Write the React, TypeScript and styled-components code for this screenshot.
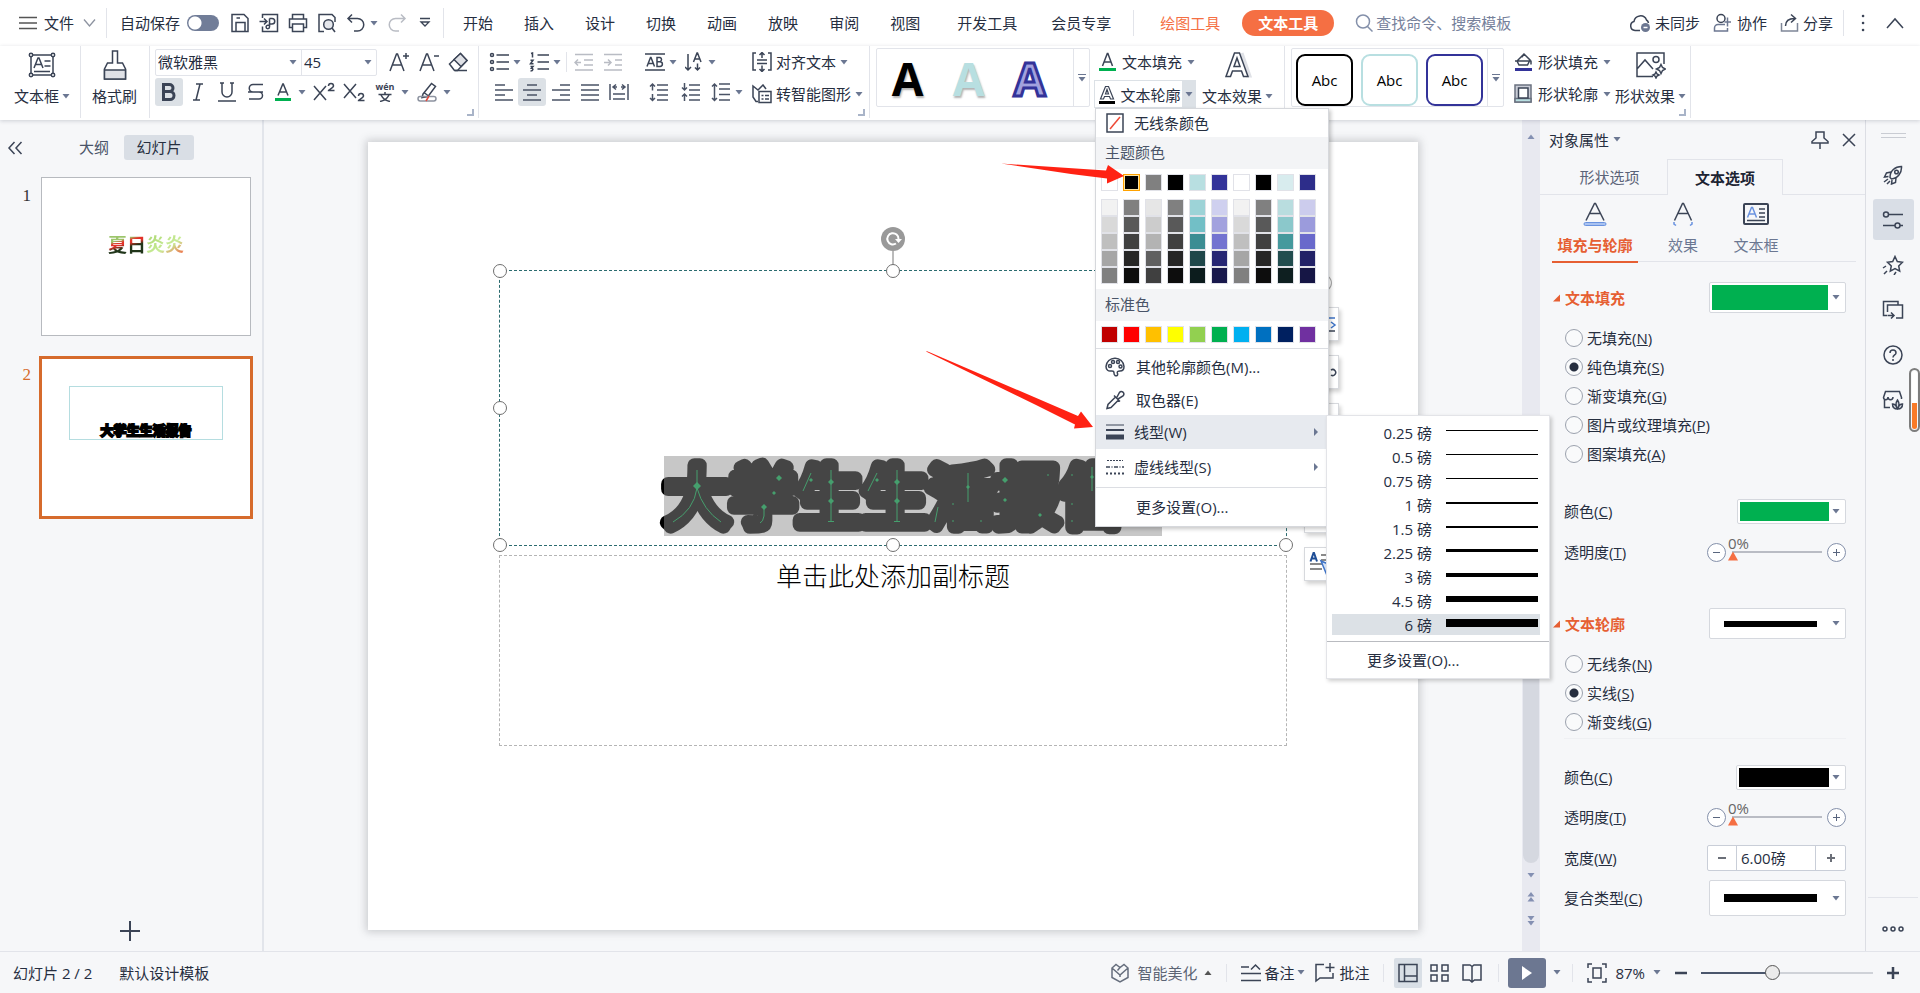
import React from "react";
import styled, { createGlobalStyle, css } from "styled-components";

const ink = "#262e3f";
const slate = "#6b7792";
const line = "#e2e4ea";
const accent = "#e65f33";
const sans = `"Open Sans", "Noto Sans CJK SC", sans-serif`;

const Global = createGlobalStyle`
  * { box-sizing: border-box; }
  body { margin: 0; background: #f6f7f9; color: ${ink}; font: 15px/20px ${sans}; }
  button, input, select { font: inherit; color: inherit; margin: 0; padding: 0; border: 0; background: none; }
  button { display: flex; align-items: center; white-space: nowrap; cursor: pointer; }
  svg { display: block; flex: none; }
`;

/* ---------- primitives ---------- */
type IconProps = { w?: number; h?: number; children: React.ReactNode; stroke?: string; sw?: number };
const Icon = ({ w = 20, h = 20, children, stroke = "#3b4456", sw = 1.5 }: IconProps) => (
  <svg width={w} height={h} viewBox={`0 0 ${w} ${h}`} fill="none" stroke={stroke} strokeWidth={sw} aria-hidden="true">
    {children}
  </svg>
);
const Caret = ({ up, fill = slate }: { up?: boolean; fill?: string }) => (
  <svg width="8" height="5" viewBox="0 0 8 5" aria-hidden="true">
    <path d={up ? "M0.5 5L4 0.5 7.5 5z" : "M0.5 0h7L4 4.5z"} fill={fill} />
  </svg>
);

const Page = styled.div`
  display: grid;
  grid-template-rows: 46px 74px 1fr 41px;
  min-height: 100vh;
`;
const Rule = styled.i<{ $h: number }>`
  flex: none;
  width: 1px;
  height: ${(p) => p.$h}px;
  background: ${line};
`;
const Space = styled.span`
  flex: 1;
`;

/* ---------- menu bar ---------- */
const MenuBar = styled.header`
  display: flex;
  align-items: center;
  background: #fff;
  padding: 0 16px 0 18px;
`;
const Cluster = styled.div<{ $gap: number; $pl?: number; $pr?: number }>`
  display: flex;
  align-items: center;
  gap: ${(p) => p.$gap}px;
  padding-left: ${(p) => p.$pl ?? 0}px;
  padding-right: ${(p) => p.$pr ?? 0}px;
`;
const MenuButton = styled.button<{ $gap?: number; $hot?: boolean }>`
  gap: ${(p) => p.$gap ?? 6}px;
  height: 28px;
  ${(p) => p.$hot && css`color: #f56f43;`}
`;
const Muted = styled.span`
  color: #5c6474;
`;
const Pill = styled.button`
  height: 26px;
  padding: 0 16px;
  border-radius: 13px;
  background: #f56f43;
  color: #fff;
  font-weight: 700;
`;
const AutoSave = styled.label`
  display: flex;
  align-items: center;
  gap: 7px;
`;
const Toggle = styled.input`
  appearance: none;
  width: 32px;
  height: 16px;
  border-radius: 8px;
  background: radial-gradient(circle at 8px 8px, #fff 6px, #717d98 7px);
`;
const Search = styled.label`
  display: flex;
  align-items: center;
  gap: 3px;
`;
const SearchInput = styled.input`
  width: 180px;
  outline: none;
  &::placeholder { color: #76819b; opacity: 1; }
`;

/* ---------- ribbon ---------- */
const Ribbon = styled.div`
  display: flex;
  background: #fff;
  box-shadow: 0 1px 4px rgba(60, 70, 90, 0.22);
  position: relative;
  z-index: 5;
`;
const Group = styled.section<{ $l: number; $r: number; $gap?: number; $plain?: boolean }>`
  position: relative;
  display: flex;
  gap: ${(p) => p.$gap ?? 4}px;
  height: 72px;
  padding: 2px ${(p) => p.$r}px 0 ${(p) => p.$l}px;
  border-right: ${(p) => (p.$plain ? 0 : 1)}px solid ${line};
`;
const Rows = styled.div<{ $gap?: number }>`
  display: grid;
  grid-template-rows: 28px 28px;
  row-gap: ${(p) => p.$gap ?? 2}px;
  align-content: start;
`;
const Row = styled.div<{ $pl?: number }>`
  display: flex;
  align-items: center;
  padding-left: ${(p) => p.$pl ?? 0}px;
`;
const Tool = styled.button<{ $w?: number; $on?: boolean; $gap?: number }>`
  justify-content: center;
  gap: ${(p) => p.$gap ?? 4}px;
  width: ${(p) => (p.$w ? p.$w + "px" : "auto")};
  height: 28px;
  border-radius: 3px;
  background: ${(p) => (p.$on ? "#dce1e6" : "transparent")};
`;
const BigTool = styled.button`
  flex-direction: column;
  gap: 4px;
  height: 60px;
`;
const BigIcon = styled.span`
  display: grid;
  place-items: center;
  height: 34px;
`;
const BigLabel = styled.span`
  display: flex;
  align-items: center;
  gap: 3px;
`;
const Launcher = styled.button`
  position: absolute;
  right: 4px;
  bottom: 2px;
  width: 7px;
  height: 7px;
  border: solid #a9b4c8;
  border-width: 0 2px 2px 0;
`;
const FontFields = styled.div`
  display: grid;
  grid-template-columns: 145px 75px;
  height: 27px;
  border: 1px solid ${line};
  border-radius: 2px;
`;
const SelectWrap = styled.label`
  display: flex;
  align-items: center;
  padding: 0 4px 0 2px;
  & + & { border-left: 1px solid ${line}; }
`;
const BareSelect = styled.select`
  appearance: none;
  flex: 1;
  min-width: 0;
  height: 25px;
  line-height: 25px;
  outline: none;
`;
const Gallery = styled.div`
  display: flex;
  height: 59px;
  border: 1px solid ${line};
  border-radius: 2px;
`;
const GalleryItems = styled.div<{ $gap: number; $pad: string }>`
  display: flex;
  gap: ${(p) => p.$gap}px;
  padding: ${(p) => p.$pad};
`;
const GalleryMore = styled.button`
  flex-direction: column;
  justify-content: center;
  gap: 2px;
  width: 16px;
  border-left: 1px solid ${line};
`;
const MoreBar = styled.i`
  width: 8px;
  height: 1px;
  background: ${slate};
`;
const WordArt = styled.button<{ $c: string; $outline?: string }>`
  justify-content: center;
  width: 61px;
  font: 700 46px/56px "Open Sans", sans-serif;
  color: ${(p) => p.$c};
  text-shadow: 1px 2px 2px rgba(0, 0, 0, 0.3);
  ${(p) => p.$outline && css`-webkit-text-stroke: 3px ${p.$outline}; text-shadow: none;`}
`;
const ShapeStyle = styled.button<{ $c: string }>`
  justify-content: center;
  width: 57px;
  height: 52px;
  border: 2px solid ${(p) => p.$c};
  border-radius: 9px;
  color: #000;
`;
const Split = styled.div`
  position: relative;
  display: flex;
  justify-content: space-between;
  width: 102px;
  height: 28px;
  border: 1px solid #dce1e6;
`;
const SplitArrow = styled.button`
  justify-content: center;
  width: 13px;
  background: #dce1e6;
`;

/* ---------- drop-down menus ---------- */
const Menu = styled.div`
  position: absolute;
  top: 27px;
  left: 0;
  width: 234px;
  background: #fff;
  border: 1px solid #d6d8dc;
  box-shadow: 2px 2px 4px rgba(0, 0, 0, 0.22);
  z-index: 10;
`;
const MenuItem = styled.button<{ $h: number; $on?: boolean; $gap?: number }>`
  width: 100%;
  height: ${(p) => p.$h}px;
  padding: 0 10px 0 9px;
  gap: ${(p) => p.$gap ?? 9}px;
  background: ${(p) => (p.$on ? "#e7eaef" : "transparent")};
`;
const MenuIcon = styled.span`
  display: grid;
  place-items: center;
  width: 20px;
`;
const MenuHead = styled.h3`
  margin: 0;
  padding: 5px 9px 7px;
  background: #f3f4f6;
  color: #4a5468;
  font-size: 15px;
  line-height: 20px;
  font-weight: 400;
`;
const Swatches = styled.div<{ $pad: string }>`
  display: grid;
  grid-template-columns: repeat(10, 17px);
  column-gap: 5px;
  padding: ${(p) => p.$pad};
`;
const Swatch = styled.button<{ $c: string; $on?: boolean }>`
  height: 17px;
  background: ${(p) => p.$c};
  border: 1px solid ${(p) => (p.$on ? "#ffa200" : "#e1e2e8")};
  ${(p) => p.$on && css`box-shadow: inset 0 0 0 1px #ffe5a0;`}
`;
const MenuRule = styled.hr<{ $c?: string; $top?: number }>`
  margin: ${(p) => p.$top ?? 0}px 0 0;
  border: 0;
  height: 1px;
  background: ${(p) => p.$c ?? "#dcdee3"};
`;
const SubAnchor = styled.div`
  position: relative;
`;
const SubMenu = styled.div`
  position: absolute;
  top: 0;
  left: 230px;
  width: 224px;
  padding-top: 6px;
  background: #fff;
  border: 1px solid #e3e4e8;
  box-shadow: 2px 2px 4px rgba(0, 0, 0, 0.2);
`;
const Weight = styled.button<{ $on?: boolean }>`
  width: 208px;
  height: 21px;
  margin: 0 0 3px 5px;
  padding: 0 2px 0 0;
  justify-content: flex-end;
  gap: 14px;
  background: ${(p) => (p.$on ? "#dce1e6" : "transparent")};
`;
const Stroke = styled.span<{ $t: number }>`
  display: flex;
  align-items: center;
  width: 92px;
  height: 10px;
  margin-bottom: 4px;
  &::before { content: ""; width: 100%; height: ${(p) => p.$t}px; background: #000; }
`;

/* ---------- workspace ---------- */
const Body = styled.main`
  display: grid;
  grid-template-columns: 264px minmax(0, 1fr) 18px 326px 54px;
  border-bottom: 1px solid ${line};
`;
const Outline = styled.aside`
  display: flex;
  flex-direction: column;
  border-right: 2px solid #e2e5eb;
  padding: 15px 9px 10px 7px;
`;
const OutlineTabs = styled.div`
  display: flex;
  align-items: center;
  height: 25px;
  margin-bottom: 17px;
`;
const OutlineTab = styled.button<{ $on?: boolean }>`
  justify-content: center;
  height: 25px;
  width: ${(p) => (p.$on ? 70 : 60)}px;
  padding-bottom: 2px;
  border-radius: 3px;
  background: ${(p) => (p.$on ? "#d9dee5" : "transparent")};
  color: ${(p) => (p.$on ? ink : "#4a5468")};
`;
const ThumbRow = styled.div<{ $on?: boolean }>`
  display: grid;
  grid-template-columns: 24px 1fr;
  align-items: start;
  gap: ${(p) => (p.$on ? 8 : 10)}px;
  margin: 0 0 20px;
  padding-right: ${(p) => (p.$on ? 0 : 2)}px;
`;
const ThumbNo = styled.span<{ $on?: boolean }>`
  padding: 9px 0 0;
  text-align: right;
  font: 17px/20px "Liberation Serif", serif;
  color: ${(p) => (p.$on ? "#d66b2c" : "#333")};
`;
const Thumb = styled.button<{ $on?: boolean }>`
  width: 100%;
  height: ${(p) => (p.$on ? 163 : 159)}px;
  flex-direction: column;
  padding-top: ${(p) => (p.$on ? 27 : 56)}px;
  background: #fff;
  border: ${(p) => (p.$on ? "3px solid #d66b2c" : "1px solid #b7babf")};
`;
const SummerArt = styled.span`
  font: 700 19px/20px "Noto Sans CJK SC", sans-serif;
  background: linear-gradient(165deg, #9cc56b 0 30%, #e3322a 40% 48%, #20351a 62% 100%) 0 0 / 38px 100% no-repeat,
    linear-gradient(150deg, #a9d66f, #c9ec98 60%, #f2643f) 38px 0 / 38px 100% no-repeat;
  background-clip: text;
  -webkit-background-clip: text;
  color: transparent;
`;
const ThumbTitle = styled.span`
  display: flex;
  justify-content: center;
  align-items: flex-end;
  width: 154px;
  height: 54px;
  border: 1px solid #b5dde0;
  font: 700 13px/18px "Noto Sans CJK SC", sans-serif;
  color: #000;
  -webkit-text-stroke: 2px #000;
`;
const AddSlide = styled.button`
  align-self: center;
`;

const Stage = styled.div`
  display: flex;
  padding: 22px 104px 21px;
`;
const Slide = styled.div`
  position: relative;
  flex: 1;
  background: #fff;
  box-shadow: 0 0 8px 2px rgba(70, 75, 85, 0.25);
`;
const Frame = styled.div<{ $top: number; $h: number; $active?: boolean }>`
  position: absolute;
  left: 12.5%;
  width: 75%;
  top: ${(p) => p.$top}px;
  height: ${(p) => p.$h}px;
  border: 1px dashed ${(p) => (p.$active ? "#2c6b6f" : "#b5b5b5")};
`;
const Subtitle = styled.p`
  margin: 2px 0 0;
  text-align: center;
  font: 300 26px/34px "Noto Sans CJK SC", sans-serif;
  color: #000;
`;
const Handle = styled.i<{ $x: number; $y: number }>`
  position: absolute;
  left: ${(p) => p.$x}%;
  top: ${(p) => p.$y}%;
  width: 14px;
  height: 14px;
  margin: -7px 0 0 -7px;
  border: 1px solid #6f6f6f;
  border-radius: 50%;
  background: #fff;
`;
const Rotate = styled.button`
  position: absolute;
  left: 50%;
  top: -44px;
  margin-left: -12px;
`;
const ArtText = styled.svg`
  position: absolute;
  left: 160px;
  top: 180px;
  overflow: visible;
`;
const FloatTools = styled.div`
  position: absolute;
  left: 804px;
  top: 2px;
  display: grid;
  gap: 14px;
`;
const FloatTool = styled.button<{ $round?: boolean }>`
  justify-content: center;
  width: 35px;
  height: 34px;
  background: #fff;
  border: 1px solid #d7d9dd;
  box-shadow: 2px 3px 4px rgba(0, 0, 0, 0.18);
  ${(p) => p.$round && css`width: 24px; height: 20px; margin-left: 4px; border-radius: 50%; box-shadow: none; border-color: #aaa;`}
`;
const Arrow = styled.svg<{ $x: number; $y: number }>`
  position: absolute;
  left: ${(p) => p.$x}px;
  top: ${(p) => p.$y}px;
  z-index: 6;
  pointer-events: none;
`;

const Scroll = styled.div`
  display: flex;
  flex-direction: column;
  align-items: center;
  gap: 14px;
  padding: 14px 1px 25px;
  background: #e8e9f0;
`;
const Track = styled.div`
  flex: 1;
  display: flex;
  align-items: flex-end;
  width: 100%;
  margin-bottom: -4px;
`;
const ScrollThumb = styled.div`
  width: 100%;
  height: 45%;
  border-radius: 8px;
  background: #d5d8e0;
`;

/* ---------- properties panel ---------- */
const Panel = styled.aside`
  border-right: 1px solid #dcdee4;
`;
const PanelHead = styled.div`
  display: flex;
  align-items: center;
  height: 39px;
  padding: 0 9px;
`;
const Tabs = styled.div`
  display: grid;
  grid-template-columns: 127px 116px 1fr;
  height: 36px;
`;
const Tab = styled.button<{ $on?: boolean }>`
  justify-content: center;
  padding-left: ${(p) => (p.$on ? 0 : 12)}px;
  border: solid ${line};
  border-width: ${(p) => (p.$on ? "1px 1px 0" : "0 0 1px")};
  font-weight: ${(p) => (p.$on ? 700 : 400)};
  color: ${(p) => (p.$on ? "#1d2433" : "#5b6478")};
`;
const TabFill = styled.span`
  border-bottom: 1px solid ${line};
`;
const SubTabs = styled.div`
  display: flex;
  gap: 20px;
  margin: 0 9px 0 12px;
  height: 67px;
  border-bottom: 1px solid ${line};
`;
const SubTab = styled.button<{ $w: number; $on?: boolean }>`
  flex-direction: column;
  justify-content: space-between;
  width: ${(p) => p.$w}px;
  height: 68px;
  padding: 7px 0 6px;
  color: ${(p) => (p.$on ? accent : slate)};
  font-weight: ${(p) => (p.$on ? 700 : 400)};
  border-bottom: 2px solid ${(p) => (p.$on ? accent : "transparent")};
`;
const Section = styled.section<{ $top: number }>`
  margin: ${(p) => p.$top}px 19px 0 12px;
`;
const SectionHead = styled.div`
  display: flex;
  align-items: center;
  gap: 4px;
  height: 31px;
  margin-bottom: 10px;
`;
const SectionTitle = styled.h2`
  margin: 0;
  flex: 1;
  font-size: 15px;
  line-height: 20px;
  color: ${accent};
`;
const ComboBox = styled.button<{ $w: number; $h: number }>`
  justify-content: space-between;
  width: ${(p) => p.$w}px;
  height: ${(p) => p.$h}px;
  padding: 2px 5px 2px 2px;
  background: #fff;
  border: 1px solid #d5d8de;
  border-radius: 2px;
`;
const Chip = styled.span<{ $w: number; $c: string }>`
  width: ${(p) => p.$w}px;
  height: 100%;
  background: ${(p) => p.$c};
`;
const LineSample = styled.span<{ $t: number }>`
  width: 93px;
  height: ${(p) => p.$t}px;
  margin-left: 12px;
  background: #000;
`;
const RadioLabel = styled.label`
  display: flex;
  align-items: center;
  gap: 4px;
  height: 29px;
  padding-left: 13px;
`;
const Radio = styled.input`
  appearance: none;
  width: 18px;
  height: 18px;
  border: 1px solid #9ba1ad;
  border-radius: 50%;
  background: #f9fafb;
  &:checked { background: radial-gradient(circle, ${ink} 4px, #f9fafb 5px); }
`;
const Field = styled.div<{ $h: number }>`
  display: flex;
  align-items: center;
  justify-content: space-between;
  height: ${(p) => p.$h}px;
  padding-left: 12px;
`;
const SliderBox = styled.div`
  display: flex;
  align-items: center;
  gap: 2px;
`;
const RoundBtn = styled.button`
  justify-content: center;
  width: 19px;
  height: 19px;
  border: 1px solid #8490aa;
  border-radius: 50%;
  background: #fff;
`;
const Percent = styled.div`
  position: relative;
  width: 97px;
  height: 19px;
`;
const PercentText = styled.output`
  position: absolute;
  left: 0;
  top: -10px;
  color: #666;
`;
const PercentRange = styled.input`
  appearance: none;
  display: block;
  width: 97px;
  height: 19px;
  background: linear-gradient(#b9bcc4, #b9bcc4) 4px 8px / 90px 2px no-repeat;
  &::-webkit-slider-thumb {
    appearance: none;
    width: 10px;
    height: 9px;
    margin-top: 8px;
    background: #f56f43;
    clip-path: polygon(50% 0, 100% 100%, 0 100%);
  }
`;
const Spinner = styled.div`
  display: grid;
  grid-template-columns: 28px 80px 29px;
  height: 26px;
  border: 1px solid #c9ced8;
  border-radius: 2px;
  background: #fff;
`;
const SpinBtn = styled.button`
  justify-content: center;
`;
const SpinInput = styled.input`
  width: 80px;
  padding: 0 4px;
  border: solid #c9ced8;
  border-width: 0 1px;
  outline: none;
`;
const Faint = styled.hr`
  margin: 2px 0 25px 12px;
  border: 0;
  height: 1px;
  background: #eff0f3;
`;

/* ---------- side strip ---------- */
const Strip = styled.nav`
  position: relative;
  display: flex;
  flex-direction: column;
  align-items: center;
  gap: 4px;
  padding-top: 13px;
`;
const Grip = styled.i`
  width: 25px;
  height: 5px;
  border: solid #c9ccd3;
  border-width: 1px 0;
  margin-bottom: 12px;
`;
const StripBtn = styled.button<{ $on?: boolean }>`
  justify-content: center;
  width: 41px;
  height: 41px;
  border-radius: 3px;
  background: ${(p) => (p.$on ? "#d9dee6" : "transparent")};
`;
const StripFoot = styled.div`
  display: flex;
  justify-content: center;
  width: 50px;
  height: 54px;
  padding-top: 10px;
  border-top: 1px solid ${line};
`;
const EdgeGauge = styled.i`
  position: absolute;
  right: 0;
  top: 248px;
  width: 11px;
  height: 64px;
  border: 2px solid #7d7d7d;
  border-radius: 6px;
  background: linear-gradient(#fff 55%, #f97a28 55%) content-box;
  padding: 1px;
`;

/* ---------- status bar ---------- */
const Status = styled.footer`
  display: flex;
  align-items: center;
  padding: 0 20px 0 13px;
`;
const Play = styled.button`
  justify-content: center;
  width: 38px;
  height: 30px;
  border-radius: 3px;
  background: #6c7791;
`;
const ViewBtn = styled.button<{ $on?: boolean }>`
  justify-content: center;
  width: 28px;
  height: 30px;
  border-radius: 2px;
  background: ${(p) => (p.$on ? "#d9dfe6" : "transparent")};
`;
const Zoom = styled.input`
  appearance: none;
  width: 172px;
  height: 20px;
  background: linear-gradient(90deg, #4a566c 42%, #cfd2d8 42%) 0 50% / 100% 2px no-repeat;
  &::-webkit-slider-thumb {
    appearance: none;
    width: 15px;
    height: 15px;
    border: 1px solid #555;
    border-radius: 50%;
    background: #ebebeb;
  }
`;

/* ---------- data ---------- */
const menus = ["开始", "插入", "设计", "切换", "动画", "放映", "审阅", "视图"];
const theme = ["#fff", "#000", "#808080", "#000", "#b8dfe1", "#333399", "#fff", "#000", "#d8ecee", "#2d2d8a"];
const shades = [
  ["#f2f2f2", "#808080", "#e6e6e6", "#808080", "#9dd3d7", "#cfd0ef", "#f2f2f2", "#808080", "#b9dddf", "#cccced"],
  ["#d9d9d9", "#595959", "#cccccc", "#595959", "#72bfc6", "#a2a2de", "#d9d9d9", "#595959", "#8bc8cb", "#9b9bdc"],
  ["#bfbfbf", "#404040", "#b3b3b3", "#404040", "#3c8d93", "#7373d0", "#bfbfbf", "#404040", "#45999d", "#6969cb"],
  ["#a6a6a6", "#262626", "#606060", "#262626", "#1f474a", "#262673", "#a6a6a6", "#262626", "#224d4f", "#222267"],
  ["#808080", "#0d0d0d", "#404040", "#0d0d0d", "#0c1c1d", "#19194c", "#808080", "#0d0d0d", "#0e1f20", "#161645"],
];
const standard = ["#c00000", "#ff0000", "#ffc000", "#ffff00", "#92d050", "#00b050", "#00b0f0", "#0070c0", "#002060", "#7030a0"];
const weights: [string, number][] = [
  ["0.25", 1], ["0.5", 1], ["0.75", 1], ["1", 2], ["1.5", 2], ["2.25", 3], ["3", 4], ["4.5", 6], ["6", 8],
];

/* ---------- pieces ---------- */
const Lines = ({ d, w = 20, stroke = "#4a5366" }: { d: string; w?: number; stroke?: string }) => (
  <Icon w={w} stroke={stroke}><path d={d} /></Icon>
);

const TopMenu = () => (
  <MenuBar>
    <MenuButton $gap={7}>
      <Icon w={19} h={14} stroke="#555" sw={1.3}><path d="M1 1.5h18M1 7h18M1 12.5h18" /></Icon>
      文件
      <Icon w={16} h={10} stroke="#8d93a0" sw={1.3}><path d="M3 1.500l5.500 6.500 5.500-6.500" /></Icon>
    </MenuButton>
    <Cluster $gap={13} $pl={9} $pr={11}>
      <Rule $h={30} />
      <AutoSave>自动保存<Toggle type="checkbox" /></AutoSave>
    </Cluster>
    <Cluster $gap={9} $pr={10}>
      <Icon><path d="M2 1.500h12l4 4v13h-16zM6 18.500v-9h9v9M6.500 5H10" /></Icon>
      <Icon><path d="M3.500 5v-3.500h15v17h-15v-5M0.500 8.500h7M5 5.500l3 3-3 3" /><path d="M10.500 5.500h2.500a2.700 2.700 0 0 1 0 5.500h-2.500M10.500 5.500v8.500a1.700 1.700 0 1 1-1.700-1.700h2.500" /></Icon>
      <Icon><path d="M4.500 6V1.500h11V6M4.500 14.500h-3V6h17v8.500h-3M4.500 11h11v7.500h-11z" /></Icon>
      <Icon><path d="M7 18.500H2V1.500h13l3 3V9" /><circle cx="11.500" cy="11.500" r="4.800" fill="#e5e7ec" /><path d="M15 15l3 4" /></Icon>
      <MenuButton $gap={4}>
        <Icon w={20}><path d="M6 1.500L2 5.500l4 4M2 5.500h9.500a6.200 6.200 0 0 1 0 12.500H8" /></Icon>
        <Caret />
      </MenuButton>
      <Icon w={20} stroke="#b9bcc4"><path d="M14 1.500l4 4-4 4M18 5.500H8.500a6.200 6.200 0 0 0 0 12.500H12" /></Icon>
      <Icon w={18} h={12} sw={1.300}><path d="M4 1.500h10M5 5l4 4 4-4z" fill="#fff" /></Icon>
      <Rule $h={30} />
    </Cluster>
    <Cluster $gap={31} $pl={9} $pr={37}>
      {menus.map((m) => <MenuButton key={m}>{m}</MenuButton>)}
    </Cluster>
    <Cluster $gap={34} $pr={22}>
      <MenuButton>开发工具</MenuButton>
      <MenuButton>会员专享</MenuButton>
    </Cluster>
    <Rule $h={26} />
    <Cluster $gap={22} $pl={26} $pr={21}>
      <MenuButton $hot>绘图工具</MenuButton>
      <Pill>文本工具</Pill>
    </Cluster>
    <Search>
      <Icon w={18} h={18} stroke="#8490aa"><circle cx="8" cy="7.500" r="6.500" /><path d="M12.500 12.500l5 5" /></Icon>
      <SearchInput placeholder="查找命令、搜索模板" aria-label="查找命令" />
    </Search>
    <Space />
    <Cluster $gap={13} $pr={10}>
      <MenuButton $gap={4}>
        <Icon w={22}><path d="M11 17.500H6a4.600 4.600 0 0 1-1-9 6.500 6.500 0 0 1 12.500-1.500 4.500 4.500 0 0 1 2 3" /><circle cx="16.500" cy="14.500" r="4.500" fill="#6c7791" stroke="none" /><path d="M14.500 14.500h4" stroke="#fff" /></Icon>
        未同步
      </MenuButton>
      <MenuButton $gap={5}>
        <Icon w={19}><circle cx="8" cy="5.500" r="4" /><path d="M12 11.500H5A3.500 3.500 0 0 0 1.500 15v3h13v-3M14.500 4.500v9M11.500 9H18" stroke="#6c7791" /></Icon>
        协作
      </MenuButton>
      <MenuButton $gap={4}>
        <Icon w={19}><path d="M1.500 10v8h16v-8" stroke="#7f8798" /><path d="M5.500 13c0-5 3-7.500 9-7.500M11 1.500l4.500 4-4.500 4" /></Icon>
        分享
      </MenuButton>
    </Cluster>
    <Rule $h={26} />
    <Cluster $gap={20} $pl={16}>
      <Icon w={6} h={18}><path d="M3 2h.1M3 9h.1M3 16h.1" strokeWidth="2.500" strokeLinecap="round" /></Icon>
      <Icon w={18} h={12}><path d="M1 11l8-9 8 9" /></Icon>
    </Cluster>
  </MenuBar>
);

const OutlineMenu = () => (
  <Menu role="menu">
    <MenuItem $h={28}>
      <MenuIcon><Icon w={18}><path d="M1 1h16v18H1z" /><path d="M4 16L14 4" stroke="#ee4a36" /></Icon></MenuIcon>无线条颜色
    </MenuItem>
    <MenuHead>主题颜色</MenuHead>
    <Swatches $pad="5px 5px 8px">
      {theme.map((c, i) => <Swatch key={i} $c={c} $on={i === 1} aria-label={c} />)}
    </Swatches>
    <Swatches $pad="0 5px 5px">
      {shades.flat().map((c, i) => <Swatch key={i} $c={c} aria-label={c} />)}
    </Swatches>
    <MenuHead>标准色</MenuHead>
    <Swatches $pad="5px">
      {standard.map((c) => <Swatch key={c} $c={c} aria-label={c} />)}
    </Swatches>
    <MenuRule />
    <MenuItem $h={35} $gap={11}>
      <MenuIcon><Icon w={20} h={20}><path d="M10 18.500c2 1 3-.5 2.500-2-.8-2 .5-2.500 2.500-2.500 3 0 4-2 4-4.500A8.800 8.800 0 0 0 10 1.200 8.800 8.800 0 0 0 1 9.500c0 3.500 2.500 5 5 4.500 2.500-.5 3 .8 3 2 0 1 .3 2 1 2.500z" /><circle cx="5" cy="9" r="1.500" /><circle cx="8" cy="5" r="1.500" /><circle cx="13" cy="5" r="1.500" /><circle cx="15.500" cy="9.500" r="1.500" /></Icon></MenuIcon>
      其他轮廓颜色(M)...
    </MenuItem>
    <MenuItem $h={31} $gap={11}>
      <MenuIcon><Icon><path d="M2 18.500l1-4L10.500 7l3 3L6 17.500zM9 5.500l6 6M11.500 8l3-5.500c2-2.500 6 .5 3.500 3.500L13 9" /></Icon></MenuIcon>取色器(E)
    </MenuItem>
    <SubAnchor>
      <MenuItem $h={34} $on aria-haspopup="menu">
        <MenuIcon><Icon w={18} h={16}><path d="M0 1h18" strokeWidth="1" /><path d="M0 6h18" strokeWidth="2" /><path d="M0 13h18" strokeWidth="5" /></Icon></MenuIcon>
        线型(W)<Space /><Icon w={4} h={8}><path d="M0 0l4 4-4 4z" fill={slate} stroke="none" /></Icon>
      </MenuItem>
      <SubMenu role="menu">
        {weights.map(([n, t]) => (
          <Weight key={n} $on={n === "6"}>{n} 磅<Stroke $t={t} /></Weight>
        ))}
        <MenuRule $c="#b9bbc0" $top={6} />
        <MenuItem $h={36} $gap={11}><MenuIcon />更多设置(O)...</MenuItem>
      </SubMenu>
    </SubAnchor>
    <MenuItem $h={36} aria-haspopup="menu">
      <MenuIcon><Icon w={18} h={16}><path d="M1 1.500h16" strokeDasharray="2 1" strokeWidth="1" /><path d="M0 8h18" strokeDasharray="4 1.500 1 1.500" /><path d="M0 14.500h18" strokeDasharray="2 2" strokeWidth="2" /></Icon></MenuIcon>
      虚线线型(S)<Space /><Icon w={4} h={8}><path d="M0 0l4 4-4 4z" fill={slate} stroke="none" /></Icon>
    </MenuItem>
    <MenuRule $top={2} />
    <MenuItem $h={38} $gap={11}><MenuIcon />更多设置(O)...</MenuItem>
  </Menu>
);

const RibbonBar = () => (
  <Ribbon>
    <Group $l={14} $r={10}>
      <BigTool>
        <BigIcon><Icon w={28} h={26}><path d="M3 3h22v20H3z" /><g fill="#fff"><circle cx="3" cy="3" r="1.700" /><circle cx="25" cy="3" r="1.700" /><circle cx="3" cy="23" r="1.700" /><circle cx="25" cy="23" r="1.700" /></g><path d="M6 16l4-10h1l4 10M7.500 12.500h6M16.500 9h6M16.500 14h6M6 19.500h16" /></Icon></BigIcon>
        <BigLabel>文本框<Caret /></BigLabel>
      </BigTool>
    </Group>
    <Group $l={11} $r={12}>
      <BigTool>
        <BigIcon><Icon w={24} h={30}><path d="M9.500 13V1h5v12h5l3 6v10h-21V19l3-6z" /><path d="M1.500 20h21v9h-21z" fill="#dfe1e6" /></Icon></BigIcon>
        <BigLabel>格式刷</BigLabel>
      </BigTool>
    </Group>
    <Group $l={5} $r={5}>
      <Rows>
        <Row>
          <FontFields>
            <SelectWrap><BareSelect aria-label="字体"><option>微软雅黑</option></BareSelect><Caret /></SelectWrap>
            <SelectWrap><BareSelect aria-label="字号"><option>45</option></BareSelect><Caret /></SelectWrap>
          </FontFields>
          <Row $pl={7}>
            <Tool $w={30} aria-label="增大字号"><Icon w={20}><path d="M1 19L7.500 2h1L15 19M3.500 13h9M17 1v6M14 4h6" /></Icon></Tool>
            <Tool $w={29} aria-label="减小字号"><Icon w={20}><path d="M1 19L7.500 2h1L15 19M3.500 13h9M15 4h5" /></Icon></Tool>
            <Tool $w={30} aria-label="清除格式"><Icon w={20}><path d="M1.500 12L12.500 1.500 19 8.500 9.500 18.500h-3z" /><path d="M6 7.500l6.500-6L19 8.500l-6 6z" fill="#dfe1e6" /><path d="M7 18.500h12" /></Icon></Tool>
          </Row>
        </Row>
        <Row>
          <Tool $w={28} $on aria-label="加粗"><Icon w={16} h={18} sw={3}><path d="M2.500 1.500h6a3.500 3.500 0 0 1 0 7h-6zM2.500 8.500H9a4 4 0 0 1 0 8H2.500z" /></Icon></Tool>
          <Tool $w={29} aria-label="倾斜"><Icon w={12} h={18}><path d="M4 1h7M1 17h7M8 1L4 17" /></Icon></Tool>
          <Tool $w={29} aria-label="下划线"><Icon w={20}><path d="M5 1v9a5 5 0 0 0 10 0V1M3 1h4M13 1h4M1 19h18" /></Icon></Tool>
          <Tool $w={30} aria-label="删除线"><Icon w={18}><path d="M16 2.500H6a3.700 3.700 0 0 0 0 7.500h6a3.500 3.500 0 0 1 0 7H2M1 10h15" /></Icon></Tool>
          <Tool $w={38} $gap={6}><Icon w={18}><path d="M4 13.500L8.800 2h.5L14 13.500M5.500 10h7" /><path d="M1 17.500h16" stroke="#00b050" strokeWidth="3" /></Icon><Caret /></Tool>
          <Tool $w={30} aria-label="上标"><Icon w={22}><path d="M1 4l12 14M13 4L1 18M15.500 4c0-3.500 5-3.500 5 0 0 1.500-5 4-5 4.500h6" /></Icon></Tool>
          <Tool $w={30} aria-label="下标"><Icon w={22}><path d="M1 2l12 14M13 2L1 16M15.500 14c0-3.500 5-3.500 5 0 0 1.500-5 4-5 4.500h6" /></Icon></Tool>
          <Tool $w={46} $gap={6}>
            <Icon w={20}>
              <text x="10" y="8" textAnchor="middle" fontFamily="Open Sans" fontWeight="700" fontSize="9" fill="#3b4456" stroke="none">wén</text>
              <path d="M3.500 12.500h13M10 10v2.500M6 13c1.500 3 4.500 5.500 9 6.500M14 13c-1.500 3-4.500 5.500-9 6.500" />
            </Icon>
            <Caret />
          </Tool>
          <Tool $w={38} $gap={6}><Icon w={20}><path d="M6 12L14.500 1.500l4 3L11 14.500l-6 1zM7 10.500l4.500 3.500" /><rect x="1" y="14.500" width="18" height="4.500" rx="2.200" stroke="#8d93a0" /><path d="M9 19l3-5" stroke="#e0483c" /></Icon><Caret /></Tool>
        </Row>
      </Rows>
      <Launcher aria-label="字体设置" />
    </Group>
    <Group $l={7} $r={8} $plain>
      <Rows>
        <Row>
          <Tool $w={38}><Icon w={20}><path d="M7.500 3H20M7.500 10H20M7.500 17H20" /><circle cx="3" cy="3" r="1.500" /><circle cx="3" cy="10" r="1.500" /><circle cx="3" cy="17" r="1.500" /></Icon><Caret /></Tool>
          <Tool $w={42}><Icon w={20}><path d="M8.500 3H20M8.500 10H20M8.500 17H20M2 1.500l1.500-.5v4.500M1.500 8.200H4L1.500 11.700H4.500M1.500 14.500H4l-1.500 1.800c2 0 2 2.700-1 2.700" /></Icon><Caret /></Tool>
          <Rule $h={20} />
          <Tool $w={33} aria-label="减少缩进"><Lines stroke="#b9bcc4" d="M1 2.500h18M10 8h9M10 13h9M1 18h18M7 10.500H1M4 7.500l-3 3 3 3" /></Tool>
          <Tool $w={26} aria-label="增加缩进"><Lines stroke="#b9bcc4" d="M1 2.500h18M12 8h7M12 13h7M1 18h18M1 10.500h7M5 7.500l3 3-3 3" /></Tool>
        </Row>
        <Row $pl={3}>
          <Tool $w={29} aria-label="左对齐"><Lines d="M1 3h10M1 8h18M1 13h10M1 18h18" /></Tool>
          <Tool $w={28} $on aria-label="居中"><Lines d="M5 3h10M1 8h18M5 13h10M1 18h18" /></Tool>
          <Tool $w={29} aria-label="右对齐"><Lines d="M9 3h10M1 8h18M9 13h10M1 18h18" /></Tool>
          <Tool $w={29} aria-label="两端对齐"><Lines d="M1 3h18M1 8h18M1 13h18M1 18h18" /></Tool>
          <Tool $w={29} aria-label="分散对齐"><Lines d="M1 2v16M19 2v16M4 5h4M12 5h4M7 2.500L4 5l3 2.500M13 2.500L16 5l-3 2.500M4 12h12M4 17h12" /></Tool>
        </Row>
      </Rows>
    </Group>
    <Group $l={0} $r={6} $gap={6}>
      <Rows>
        <Row>
          <Tool $w={40}><Icon w={20}><path d="M0 2h20M0 18h20M2 14.500l3.500-9h.5l3.500 9M3.500 11.500h5M12 5.500v9h3a2.400 2.400 0 0 0 0-4.800 2.200 2.200 0 0 0 0-4.200zM12 9.800h3" /></Icon><Caret /></Tool>
          <Tool $w={38} $gap={6}><Icon w={17}><path d="M3 2v16M0 15l3 3 3-3M8.500 10l3.500-9h.5l3.500 9M10 7h5M12.500 11.500V18M10 15.500l2.500 2.500 2.500-2.500" /></Icon><Caret /></Tool>
        </Row>
        <Row $pl={3}>
          <Tool $w={30} aria-label="增加段间距"><Lines d="M8 3h11M8 8h11M8 13h11M8 18h11M3.500 8.500V2M1 4.500L3.500 2 6 4.500M3.500 12v6.500M1 16l2.500 2.500L6 16" /></Tool>
          <Tool $w={34} aria-label="减少段间距"><Lines d="M8 3h11M8 8h11M8 13h11M8 18h11M3.500 1v7M1 5.500L3.500 8 6 5.500M3.500 19v-7M1 14.500L3.500 12 6 14.500" /></Tool>
          <Tool $w={38}><Lines d="M8 2h11M8 7h11M8 12.500h11M8 18h11M3.500 2v16M1 4.500L3.500 2 6 4.500M1 16l2.500 2.500L6 16" /><Caret /></Tool>
        </Row>
      </Rows>
      <Rows $gap={4}>
        <Row><Tool><Icon w={20}><path d="M4 1H1v17h3M16 1h3v17h-3M5 8h10M5 11.500h10M10 0v6M7.500 3L10 .5 12.500 3M10 13.500V20M7.500 17l2.500 2.500 2.500-2.500" /></Icon>对齐文本<Caret /></Tool></Row>
        <Row><Tool><Icon w={20}><path d="M6 17.500H4L1 13V2l5 4 5-5 3 4" /><path d="M7 7.500h12v11H7zM9.500 11.500h2M13 11.500h4M9.500 15h2M13 15h4" /></Icon>转智能图形<Caret /></Tool></Row>
      </Rows>
      <Launcher aria-label="段落设置" />
    </Group>
    <Group $l={6} $r={0} $plain>
      <Gallery>
        <GalleryItems $gap={0} $pad="0 13px 0 0">
          <WordArt $c="#000">A</WordArt>
          <WordArt $c="#b8dfe1">A</WordArt>
          <WordArt $c="#a2a2de" $outline="#333399">A</WordArt>
        </GalleryItems>
        <GalleryMore aria-label="更多样式"><MoreBar /><Caret /></GalleryMore>
      </Gallery>
    </Group>
    <Group $l={4} $r={11} $gap={6}>
      <Rows $gap={4}>
        <Row $pl={4}><Tool $gap={5}><Icon w={19}><path d="M4.500 14L9.300 1.500h.6L14.500 14M6 10h7.500" /><path d="M1 17.500h17" stroke="#00b050" strokeWidth="3" /></Icon>文本填充<Caret /></Tool></Row>
        <Split>
          <Tool $w={87}><Icon w={20}><path d="M3.500 14L8.500 1.500h3L16.500 14h-3l-1-2.500h-5l-1 2.500zM10 4.500L8.500 9h3z" strokeWidth="1.200" /><path d="M2 17.500h16" stroke="#000" strokeWidth="3" /></Icon>文本轮廓</Tool>
          <SplitArrow aria-label="文本轮廓选项"><Caret /></SplitArrow>
          <OutlineMenu />
        </Split>
      </Rows>
      <BigTool>
        <BigIcon><Icon w={28} h={28}><path d="M18 2l8 23h-4" stroke="#dfe1e6" strokeWidth="3" /><path d="M2 25.500L10.500 2h5L24 25.500h-4.500L17.500 20h-9l-2 5.500zM13 7l-3 8.500h6z" fill="#fff" /></Icon></BigIcon>
        <BigLabel>文本效果<Caret /></BigLabel>
      </BigTool>
    </Group>
    <Group $l={6} $r={4}>
      <Gallery>
        <GalleryItems $gap={8} $pad="5px 4px 0 4px">
          <ShapeStyle $c="#000">Abc</ShapeStyle>
          <ShapeStyle $c="#b8dfe1">Abc</ShapeStyle>
          <ShapeStyle $c="#333399">Abc</ShapeStyle>
        </GalleryItems>
        <GalleryMore aria-label="更多形状样式"><MoreBar /><Caret /></GalleryMore>
      </Gallery>
      <Rows $gap={4}>
        <Row $pl={6}><Tool $gap={5}><Icon w={19}><path d="M3 9l7-7 6 6-2.500 5H5zM1 9h16M10 2L8 5M17 8.500v4" /><path d="M1 17.500h17" stroke="#333399" strokeWidth="3" /></Icon>形状填充<Caret /></Tool></Row>
        <Row $pl={6}><Tool $gap={5}><Icon w={19}><path d="M1 1h16v17H1z" fill="#c9ccd6" stroke="#6b7280" /><path d="M1 14.500h16v3.500H1z" fill="#b8dfe1" stroke="#6b7280" /><path d="M4.500 4h9.500v10H4.500z" fill="#fff" /></Icon>形状轮廓<Caret /></Tool></Row>
      </Rows>
      <BigTool>
        <BigIcon><Icon w={30} h={28}><path d="M17 25.500H1V2h27v11M1 18l8-9 8 9" /><circle cx="20" cy="8.500" r="3" /><path d="M25 13.500l1.500 3 3 1.500-3 1.500-1.500 3-1.500-3-3-1.500 3-1.500zM20 21l1 2 2 1-2 1-1 2-1-2-2-1 2-1z" /></Icon></BigIcon>
        <BigLabel>形状效果<Caret /></BigLabel>
      </BigTool>
      <Launcher aria-label="形状设置" />
    </Group>
  </Ribbon>
);

const handles = [[0, 0], [50, 0], [100, 0], [0, 50], [100, 50], [0, 100], [50, 100], [100, 100]];

/* Glints of the green fill left visible between the thick outlines: [x, y, radius]. */
const glints = [
  [37, 35, 4], [104, 56, 3], [114, 42, 2], [119, 27, 3], [171, 31, 3], [171, 50, 3], [151, 29, 2], [237, 31, 3], [237, 50, 3], [217, 29, 2],
  [308, 36, 2], [293, 53, 1], [293, 70, 1], [321, 70, 1], [345, 29, 3], [345, 49, 2], [380, 64, 2], [388, 24, 1], [412, 24, 1],
  [432, 26, 2], [412, 53, 1], [412, 70, 1],
];

const Canvas = () => (
  <Stage>
    <Slide>
      <Frame $top={128} $h={276} $active>
        <ArtText width="510" height="90" viewBox="0 0 510 90">
          <text x="4" y="70" fontFamily="Noto Sans CJK SC, sans-serif" fontSize="66" fill="#000" stroke="#000" strokeWidth="14" strokeLinejoin="round">
            大学生生活报告
          </text>
          <g fill="none" stroke="#00b050">
            <path d="M37 19v18q-3 22-24 34M37 37q6 22 24 34" />
            <path d="M104 56v9q-1 6-4 7M308 22v29M278 56l-3 15M432 16v24M151 22l-8 18M217 22l-9 18M171 19v52M237 19v52M168 70.500h6M234 70.500h6" />
          </g>
          {glints.map(([x, y, r]) => (
            <path key={`${x}-${y}`} fill="#00b050" d={`M${x} ${y - r}l${r} ${r} -${r} ${r} -${r} -${r}z`} />
          ))}
          <rect x="4" y="5" width="498" height="80" fill="rgba(140,140,140,0.49)" />
        </ArtText>
        {handles.map(([x, y]) => <Handle key={`${x}-${y}`} $x={x} $y={y} />)}
        <Rotate aria-label="旋转">
          <Icon w={24} h={38}><path d="M12 24v14" stroke="#777" strokeWidth="1" /><circle cx="12" cy="12" r="12" fill="#999" stroke="none" /><path d="M15 16.500a5.600 5.600 0 1 1 2.500-4.500" stroke="#fff" strokeWidth="2" /><path d="M14 12h7l-3.500 4z" fill="#fff" stroke="none" /></Icon>
        </Rotate>
        <FloatTools>
          <FloatTool $round aria-label="收起" />
          <FloatTool aria-label="布局"><Icon w={30}><path d="M22 4h6M24 8l4 3-4 3" stroke="#3f74c8" /><path d="M22 17h6" /></Icon></FloatTool>
          <FloatTool aria-label="格式"><Icon w={30}><path d="M24 8a3 3 0 1 1 0 5" /></Icon></FloatTool>
          <FloatTool aria-label="填充" />
          <FloatTool aria-label="轮廓" />
          <FloatTool aria-label="效果"><Icon w={20}><path d="M6 18.500h8" /></Icon></FloatTool>
          <FloatTool aria-label="文字工具">
            <Icon w={26} h={24}><path d="M12 3h12M12 8h12M1 12h12M1 17h12" stroke="#8a8a8a" strokeWidth="2" /><path d="M1.500 9.500L4.500 1h.5l3 8.500M2.500 6.500h4.500" stroke="#1f4e96" strokeWidth="2" /><path d="M12 9l12 5-5 2-2 5z" fill="#d7e4f7" stroke="#3f74c8" /></Icon>
          </FloatTool>
        </FloatTools>
      </Frame>
      <Frame $top={413} $h={191}>
        <Subtitle>单击此处添加副标题</Subtitle>
      </Frame>
      <Arrow $x={633} $y={20} width="124" height="24" viewBox="0 0 124 24">
        <path d="M0 1.500L105 8.500 107 3 123 14 106 21.500 106 16.500 70 12z" fill="#ff2213" />
      </Arrow>
      <Arrow $x={558} $y={208} width="168" height="82" viewBox="0 0 168 82">
        <path d="M0 1.500Q1 1 3 2L152 66 155 61.500 167 77 148 78.500 149 74.500 110 55z" fill="#ff2213" />
      </Arrow>
    </Slide>
  </Stage>
);

const Chevrons = ({ up }: { up?: boolean }) => (
  <Icon w={8} h={10}>
    <path d={up ? "M.5 4.500L4 0l3.500 4.500zM.5 9.500L4 5l3.500 4.500z" : "M.5 0h7L4 4.500zM.5 5h7L4 9.500z"} fill="#8490b2" stroke="none" />
  </Icon>
);

const Option = ({ name, text, k, on }: { name: string; text: string; k: string; on?: boolean }) => (
  <RadioLabel>
    <Radio type="radio" name={name} defaultChecked={on} />
    <span>{text}(<u>{k}</u>)</span>
  </RadioLabel>
);
const Label = ({ text, k }: { text: string; k: string }) => <span>{text}(<u>{k}</u>)</span>;
const Opacity = () => (
  <Field $h={40}>
    <Label text="透明度" k="T" />
    <SliderBox>
      <RoundBtn aria-label="减少"><Icon w={9} h={9} stroke="#59657e" sw={1}><path d="M1 4.500h7" /></Icon></RoundBtn>
      <Percent>
        <PercentText>0%</PercentText>
        <PercentRange type="range" min={0} max={100} defaultValue={0} aria-label="透明度" />
      </Percent>
      <RoundBtn aria-label="增加"><Icon w={9} h={9} stroke="#59657e" sw={1}><path d="M1 4.500h7M4.500 1v7" /></Icon></RoundBtn>
    </SliderBox>
  </Field>
);
const Fold = () => <Icon w={9} h={8}><path d="M8 .5V7.500H1z" fill={accent} stroke="none" /></Icon>;

const Properties = () => (
  <Panel>
    <PanelHead>
      <MenuButton $gap={4}>对象属性<Caret /></MenuButton>
      <Space />
      <Cluster $gap={13}>
        <Icon w={18} h={18}><path d="M5 1h8v6l4 3.500V12H1v-1.500L5 7zM9 12v6" /></Icon>
        <Icon w={14} h={14}><path d="M1 1l12 12M13 1L1 13" /></Icon>
      </Cluster>
    </PanelHead>
    <Tabs>
      <Tab>形状选项</Tab>
      <Tab $on>文本选项</Tab>
      <TabFill />
    </Tabs>
    <SubTabs>
      <SubTab $w={86} $on>
        <Icon w={24} h={25}><path d="M3 18.500L11.500 1.500h1L21 18.500M6.500 11.500h11" /><rect x="1" y="20.500" width="22" height="3" rx="1.500" fill="#a9c2f0" stroke="#6a93e0" strokeWidth="1" /></Icon>
        填充与轮廓
      </SubTab>
      <SubTab $w={50}>
        <Icon w={22} h={25}><path d="M2.500 18.500L10.500 1.500h1L19.500 18.500M6 11.500h10" /><path d="M2 20v2l2 1.500M20 20v2l-2 1.500" stroke="#6a93e0" /></Icon>
        效果
      </SubTab>
      <SubTab $w={56}>
        <Icon w={26} h={25}><rect x="1" y="2" width="24" height="20" rx="1" strokeWidth="2" /><path d="M4.500 15.500L8.500 5.500h1l4 10M6 12h6" stroke="#6a93e0" /><path d="M16 7h6M16 11h6M16 15h6M4 18.500h18" /></Icon>
        文本框
      </SubTab>
    </SubTabs>
    <Section $top={20}>
      <SectionHead>
        <Fold /><SectionTitle>文本填充</SectionTitle>
        <ComboBox $w={137} $h={31} aria-label="填充样式"><Chip $w={116} $c="#00b050" /><Caret /></ComboBox>
      </SectionHead>
      <Option name="fill" text="无填充" k="N" />
      <Option name="fill" text="纯色填充" k="S" on />
      <Option name="fill" text="渐变填充" k="G" />
      <Option name="fill" text="图片或纹理填充" k="P" />
      <Option name="fill" text="图案填充" k="A" />
    </Section>
    <Section $top={22}>
      <Field $h={42}><Label text="颜色" k="C" /><ComboBox $w={109} $h={25} aria-label="填充颜色"><Chip $w={89} $c="#00b050" /><Caret /></ComboBox></Field>
      <Opacity />
    </Section>
    <Section $top={36}>
      <SectionHead>
        <Fold /><SectionTitle>文本轮廓</SectionTitle>
        <ComboBox $w={137} $h={31} aria-label="轮廓样式"><LineSample $t={6} /><Caret /></ComboBox>
      </SectionHead>
      <Option name="line" text="无线条" k="N" />
      <Option name="line" text="实线" k="S" on />
      <Option name="line" text="渐变线" k="G" />
      <Faint />
      <Field $h={26}><Label text="颜色" k="C" /><ComboBox $w={110} $h={25} aria-label="轮廓颜色"><Chip $w={90} $c="#000" /><Caret /></ComboBox></Field>
      <Field $h={7} />
      <Opacity />
      <Field $h={42}>
        <Label text="宽度" k="W" />
        <Spinner>
          <SpinBtn aria-label="减少"><Icon w={8} h={8} stroke="#6b6f78" sw={2}><path d="M0 4h8" /></Icon></SpinBtn>
          <SpinInput defaultValue="6.00磅" aria-label="宽度" />
          <SpinBtn aria-label="增加"><Icon w={8} h={8} stroke="#6b6f78" sw={2}><path d="M0 4h8M4 0v8" /></Icon></SpinBtn>
        </Spinner>
      </Field>
      <Field $h={38}><Label text="复合类型" k="C" /><ComboBox $w={137} $h={36} aria-label="复合类型"><LineSample $t={8} /><Caret /></ComboBox></Field>
    </Section>
  </Panel>
);

const SideStrip = () => (
  <Strip>
    <Grip />
    <StripBtn aria-label="火箭"><Icon><path d="M7 12.500C7 6 12 1.500 18.500 1.500 19 8 14.500 13.500 8.500 14zM8 7L3.500 8 1.500 12l4-.5M13 13l-.5 4.500-4 1.500.5-4M5 14l-4 3M7 16l-3 3" /><circle cx="13.500" cy="7" r="1.800" /></Icon></StripBtn>
    <StripBtn $on aria-label="属性"><Icon w={22}><circle cx="4" cy="4.500" r="2.500" /><path d="M6.500 4.500H21M1 15.500h12M18 15.500h3" /><circle cx="15.500" cy="15.500" r="2.500" /></Icon></StripBtn>
    <StripBtn aria-label="收藏"><Icon w={22}><path d="M13 1.500l2.300 5 5.200.7-3.800 3.700 1 5.300-4.700-2.500-4.700 2.500 1-5.300L5.500 7.200l5.200-.7zM4 11l-3 2M5 16l-3 3M14 17l-2 3" /></Icon></StripBtn>
    <StripBtn aria-label="切换"><Icon w={22}><path d="M5 15.500H1.500v-14H16v3M5.500 12V5h15v13H14M5.500 15.500h6M9 12.500l3 3-3 3" /></Icon></StripBtn>
    <StripBtn aria-label="帮助"><Icon><circle cx="10" cy="10" r="9" /><path d="M7 8c0-4 6-4 6 0 0 2-3 2-3 4.500M10 14v2" /></Icon></StripBtn>
    <StripBtn aria-label="商城"><Icon w={22}><path d="M8 17.500H2.500V9.500M1.500 7.500l2-6h14l2 6M1.500 7c0 3.500 4.500 3.500 4.500 0 0 3.500 5 3.500 5 0M19.500 7v2" /><path d="M15.500 19c-2-3-2-6 0-9 2 3 2 6 0 9zM15.500 19c-3 0-5-2-5-5 3 0 4 2 5 5zM15.500 19c3 0 5-2 5-5-3 0-4 2-5 5z" fill="#d9dce3" /></Icon></StripBtn>
    <Space />
    <StripFoot>
      <StripBtn aria-label="更多"><Icon w={22} h={8}><circle cx="3" cy="4" r="2" /><circle cx="11" cy="4" r="2" /><circle cx="19" cy="4" r="2" /></Icon></StripBtn>
    </StripFoot>
    <EdgeGauge />
  </Strip>
);

const StatusBar = () => (
  <Status>
    <Cluster $gap={27}>
      <span>幻灯片 2 / 2</span>
      <span>默认设计模板</span>
    </Cluster>
    <Space />
    <Cluster $gap={14} $pr={10}>
      <MenuButton $gap={7}><Icon w={20}><path d="M10 4.500L6 1.500 2 5v9.500l8 4.500 8-4.500V5l-4-3.500zM10 4.500l-2.500 3M2 5l8 7 8-7M10 12v2" stroke="#666e7d" /></Icon><Muted>智能美化</Muted><Caret up fill="#555" /></MenuButton>
      <Rule $h={18} />
      <Cluster $gap={10}>
        <MenuButton $gap={3}><Icon w={20}><path d="M0 4h8M0 10.500h20M0 17.500h20M10 6.500L14.500 2 19 6.500" /></Icon>备注<Caret /></MenuButton>
        <MenuButton $gap={4}><Icon w={20}><path d="M9 1.500H1V18l4-3h13V10M15 0v9M10.500 4.500h9" /></Icon>批注</MenuButton>
      </Cluster>
      <Rule $h={18} />
    </Cluster>
    <Cluster $gap={4} $pr={12}>
      <ViewBtn $on aria-label="普通视图"><Icon><path d="M1 1.500h18v17H1zM6.500 1.500v17M6.500 13h12.500" /></Icon></ViewBtn>
      <ViewBtn aria-label="浏览视图"><Icon><path d="M1 2h6v6H1zM12 2h6v6h-6zM1 12h6v6H1zM12 12h6v6h-6z" /></Icon></ViewBtn>
      <ViewBtn aria-label="阅读视图"><Icon><path d="M10 3.500L8 2H1v15h6.500l2.500 2 2.500-2H19V2h-7zM10 3.500V19" /></Icon></ViewBtn>
    </Cluster>
    <Rule $h={18} />
    <Cluster $gap={7} $pl={9} $pr={11}>
      <Play aria-label="播放"><Icon w={12} h={16}><path d="M1 1l10 7-10 7z" fill="#fff" stroke="none" /></Icon></Play>
      <Caret />
    </Cluster>
    <Rule $h={18} />
    <Cluster $gap={13} $pl={14}>
      <MenuButton $gap={8}><Icon><path d="M1 5V1h4M15 1h4v4M19 15v4h-4M5 19H1v-4M6 5h8v10H6z" /></Icon>87%<Caret /></MenuButton>
      <Icon w={14} h={14} sw={2.500}><path d="M1 7h12" /></Icon>
      <Zoom type="range" min={0} max={100} defaultValue={41} aria-label="缩放" />
      <Icon w={14} h={14} sw={2.500}><path d="M1 7h12M7 1v12" /></Icon>
    </Cluster>
  </Status>
);

export default function App() {
  return (
    <>
      <Global />
      <Page>
        <TopMenu />
        <RibbonBar />
        <Body>
          <Outline>
            <OutlineTabs>
              <Cluster $gap={0} $pr={41}><Icon w={16} h={14}><path d="M7.500 1L2 7l5.500 6M14.500 1L9 7l5.500 6" /></Icon></Cluster>
              <OutlineTab>大纲</OutlineTab>
              <OutlineTab $on>幻灯片</OutlineTab>
            </OutlineTabs>
            <ThumbRow><ThumbNo>1</ThumbNo><Thumb><SummerArt>夏日炎炎</SummerArt></Thumb></ThumbRow>
            <ThumbRow $on><ThumbNo $on>2</ThumbNo><Thumb $on><ThumbTitle>大学生生活报告</ThumbTitle></Thumb></ThumbRow>
            <Space />
            <AddSlide aria-label="新建幻灯片"><Icon w={20}><path d="M10 0v20M0 10h20" strokeWidth="2" /></Icon></AddSlide>
          </Outline>
          <Canvas />
          <Scroll>
            <Caret up fill="#8490b2" />
            <Track><ScrollThumb /></Track>
            <Caret fill="#8490b2" />
            <Chevrons up />
            <Chevrons />
          </Scroll>
          <Properties />
          <SideStrip />
        </Body>
        <StatusBar />
      </Page>
    </>
  );
}
